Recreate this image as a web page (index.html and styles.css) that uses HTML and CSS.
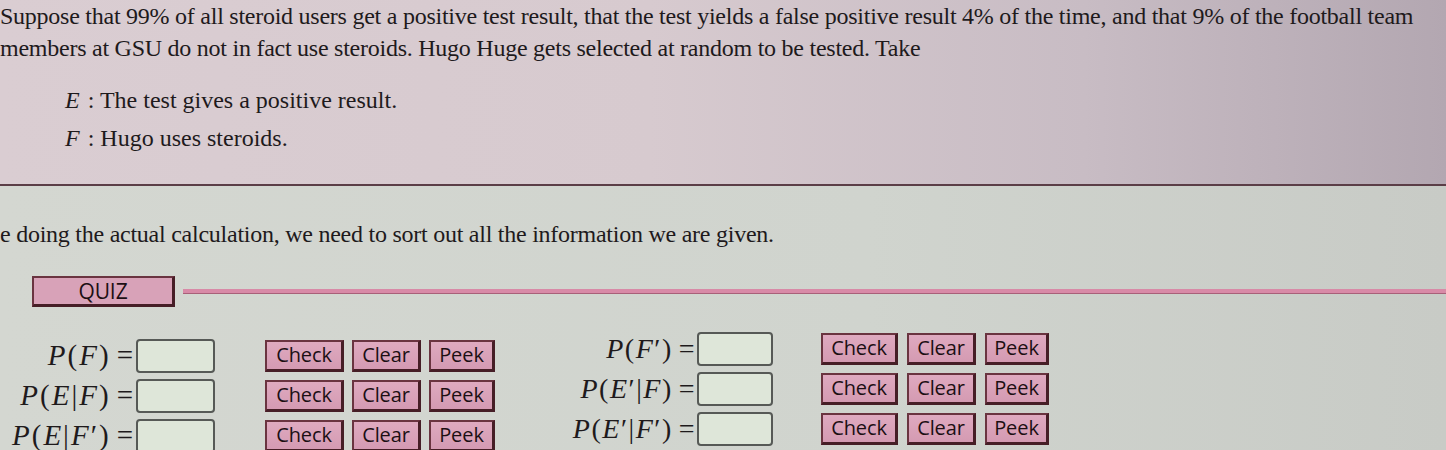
FILE: index.html
```html
<!DOCTYPE html>
<html lang="en">
<head>
<meta charset="utf-8">
<title>Quiz</title>
<link rel="stylesheet" href="styles.css">
</head>
<body>
<div class="page">
  <section class="top">
    <p class="intro">Suppose that 99% of all steroid users get a positive test result, that the test yields a false positive result 4% of the time, and that 9% of the football team members at GSU do not in fact use steroids. Hugo Huge gets selected at random to be tested. Take</p>
    <div class="defs">
      <div class="def"><i class="m">E</i> : The test gives a positive result.</div>
      <div class="def"><i class="m">F</i> : Hugo uses steroids.</div>
    </div>
  </section>
  <section class="bottom">
    <p class="lead">e doing the actual calculation, we need to sort out all the information we are given.</p>
    <div class="quiz-bar">
      <button class="btn quiz">QUIZ</button>
      <div class="bar"></div>
    </div>
    <div class="grid">
      <div class="col">
        <div class="row">
          <span class="label"><i>P</i>(<i>F</i>)<span class="eq">=</span></span>
          <span class="input"></span>
          <div class="btns"><button class="btn check">Check</button><button class="btn clear">Clear</button><button class="btn peek">Peek</button></div>
        </div>
        <div class="row">
          <span class="label"><i>P</i>(<i>E</i>|<i>F</i>)<span class="eq">=</span></span>
          <span class="input"></span>
          <div class="btns"><button class="btn check">Check</button><button class="btn clear">Clear</button><button class="btn peek">Peek</button></div>
        </div>
        <div class="row">
          <span class="label"><i>P</i>(<i>E</i>|<i>F</i>′)<span class="eq">=</span></span>
          <span class="input"></span>
          <div class="btns"><button class="btn check">Check</button><button class="btn clear">Clear</button><button class="btn peek">Peek</button></div>
        </div>
      </div>
      <div class="col col-right">
        <div class="row">
          <span class="label"><i>P</i>(<i>F</i>′)<span class="eq">=</span></span>
          <span class="input"></span>
          <div class="btns"><button class="btn check">Check</button><button class="btn clear">Clear</button><button class="btn peek">Peek</button></div>
        </div>
        <div class="row">
          <span class="label"><i>P</i>(<i>E</i>′|<i>F</i>)<span class="eq">=</span></span>
          <span class="input"></span>
          <div class="btns"><button class="btn check">Check</button><button class="btn clear">Clear</button><button class="btn peek">Peek</button></div>
        </div>
        <div class="row">
          <span class="label"><i>P</i>(<i>E</i>′|<i>F</i>′)<span class="eq">=</span></span>
          <span class="input"></span>
          <div class="btns"><button class="btn check">Check</button><button class="btn clear">Clear</button><button class="btn peek">Peek</button></div>
        </div>
      </div>
    </div>
  </section>
</div>
</body>
</html>
```
FILE: styles.css
```css
html, body {
  margin: 0;
  padding: 0;
}
body {
  width: 1446px;
  height: 450px;
  overflow: hidden;
  font-family: "Liberation Serif", "Times New Roman", serif;
  color: #1e1a1c;
  background: #cfd2cd;
}
.page {
  display: flex;
  flex-direction: column;
}
.top {
  height: 186px;
  background: linear-gradient(to right, #dacdd2 0%, #d7cacf 45%, #c8bcc4 75%, #b3a7b1 100%);
  border-bottom: 2px solid #5b3e47;
  box-shadow: 0 1px 0 #e4a9bd, 0 -1px 0 #e2b3c3;
  box-sizing: border-box;
  overflow: hidden;
}
.intro {
  margin: 0;
  font-size: 24px;
  line-height: 32px;
  letter-spacing: -0.25px;
  width: 1440px;
}
.defs {
  margin: 17px 0 0 65px;
  display: flex;
  flex-direction: column;
  font-size: 24px;
  line-height: 38px;
}
.m {
  font-style: italic;
  margin-right: 2px;
}
.bottom {
  flex: 1;
  background: linear-gradient(to right, #d4d7d1 0%, #d0d4ce 60%, #c8cbc6 100%);
  padding-top: 33px;
}
.lead {
  margin: 0;
  font-size: 24px;
  line-height: 30px;
  letter-spacing: -0.25px;
}
.quiz-bar {
  display: flex;
  align-items: center;
  margin-top: 27px;
  padding-left: 32px;
  gap: 8px;
}
.btn {
  font-family: "Open Sans", "DejaVu Sans", sans-serif;
  font-size: 20px;
  font-weight: 500;
  color: #1c0f13;
  background: linear-gradient(to bottom, #dfaac0, #d49ab2);
  border-style: solid;
  border-color: #6a3440 #461e26 #461e26 #6a3440;
  border-width: 2px 3px 3px 2px;
  padding: 0;
  margin: 0;
  height: 32px;
  line-height: 26px;
  text-align: center;
  box-sizing: border-box;
  letter-spacing: -0.1px;
}
.quiz {
  width: 143px;
  height: 31px;
  background: #d8a2b8;
  font-size: 21px;
}
.bar {
  flex: 1;
  height: 4px;
  background: #d88aa7;
  border-bottom: 1px solid #a86079;
}
.grid {
  display: flex;
  margin-top: 32px;
}
.col {
  display: flex;
  flex-direction: column;
  gap: 7px;
  width: 555px;
}
.col-right {
  margin-top: -7px;
  width: 600px;
}
.row {
  display: flex;
  align-items: center;
  height: 33px;
}
.label {
  width: 136px;
  flex: none;
  text-align: right;
  font-size: 29px;
  letter-spacing: 2px;
  white-space: nowrap;
  padding-right: 1px;
  box-sizing: border-box;
}
.eq {
  margin-left: 6px;
}
.col-right .label {
  width: 142px;
  font-size: 28px;
  letter-spacing: 1.5px;
}
.input {
  flex: none;
  width: 79px;
  height: 34px;
  box-sizing: border-box;
  border: 2px solid #565956;
  border-radius: 4px;
  background: #dee6d9;
}
.col-right .input {
  width: 76px;
}
.btns {
  display: flex;
  gap: 8px;
  margin-left: 50px;
}
.col-right .btns {
  margin-left: 48px;
  gap: 9px;
}
.check { width: 79px; }
.clear { width: 69px; }
.peek { width: 66px; }
.col-right .check { width: 77px; }
.col-right .clear { width: 69px; }
.col-right .peek { width: 64px; }
```
